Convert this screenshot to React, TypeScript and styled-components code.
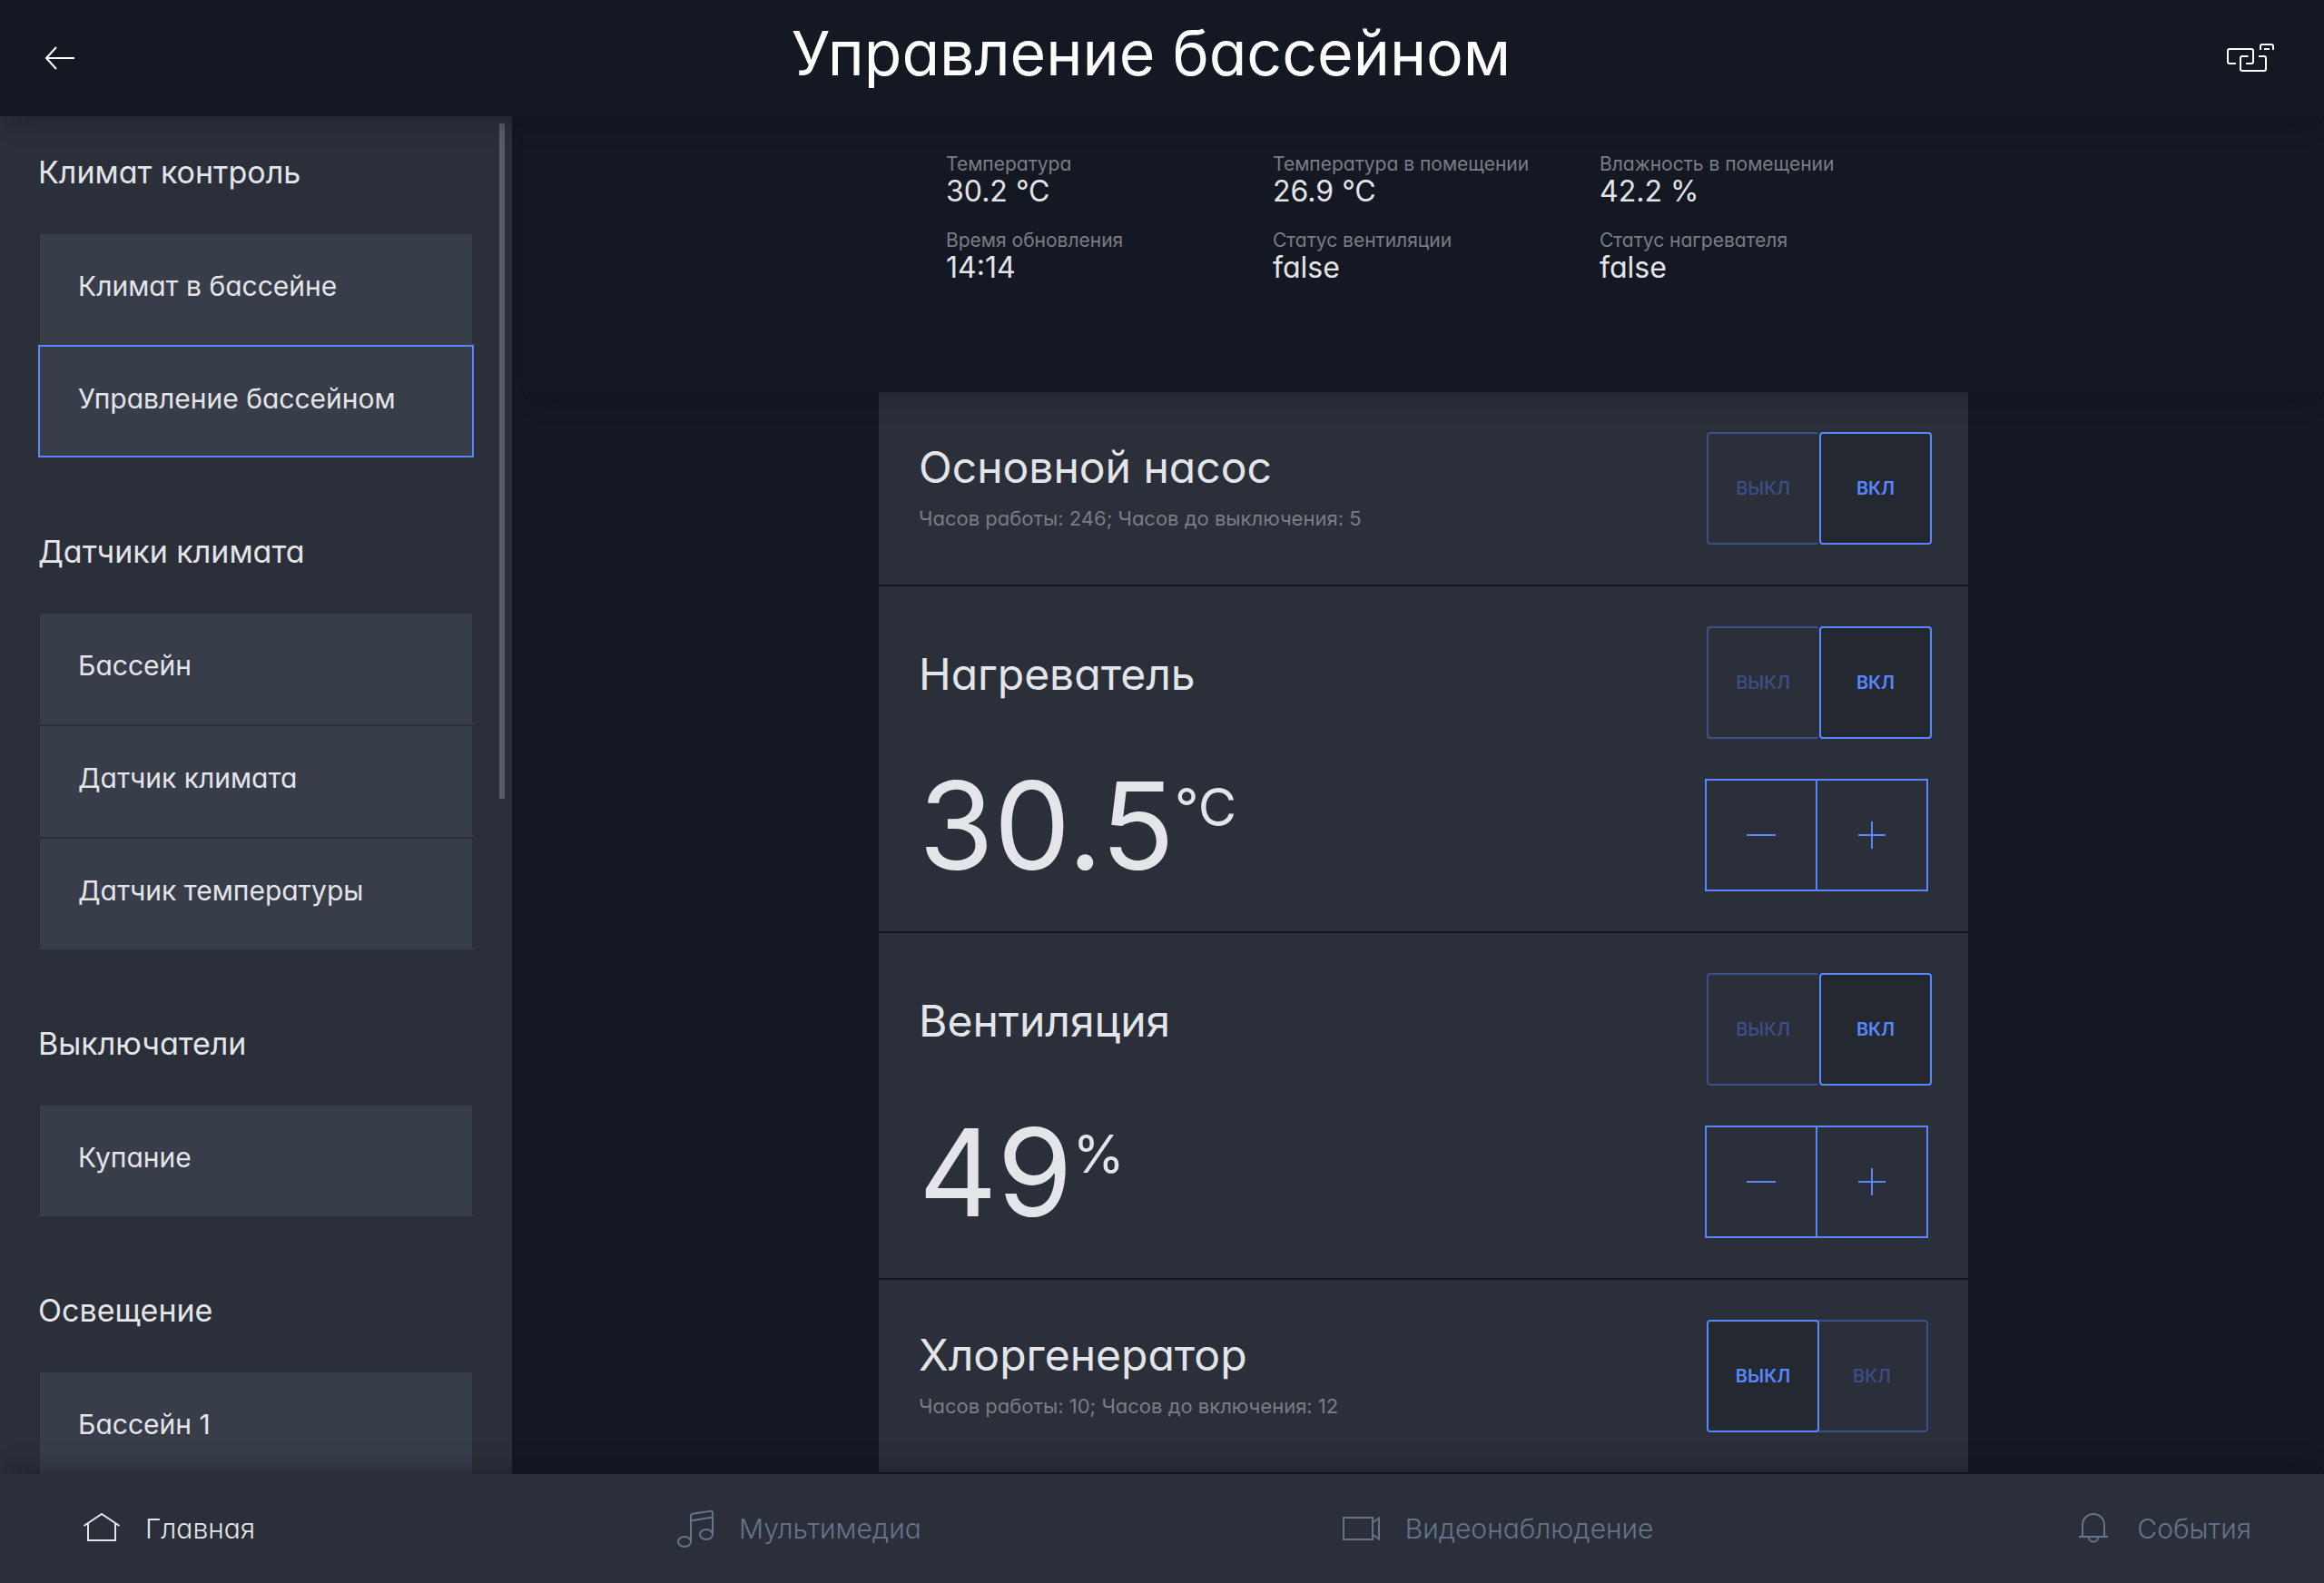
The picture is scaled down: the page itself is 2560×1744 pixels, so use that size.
import React, { useState } from "react";
import styled, { createGlobalStyle, css } from "styled-components";

const color = {
  page: "#141822",
  panel: "#2b2f3a",
  item: "#383d4a",
  text: "#e4e5e9",
  muted: "#7b7d84",
  nav: "#64748b",
  accent: "#5a86ff",
  accentDim: "#3c4f87",
  pressed: "#242830",
};

const GlobalStyle = createGlobalStyle`
  *, *::before, *::after { box-sizing: border-box; }
  body {
    margin: 0;
    background: ${color.page};
    color: ${color.text};
    font-family: Inter, "Noto Sans", sans-serif;
    font-feature-settings: "cv11";
  }
  h1, h2, h3, p, dl, dd, ul { margin: 0; padding: 0; }
  h1, h2, h3 { font-weight: 400; }
  ul { list-style: none; }
  a { color: inherit; text-decoration: none; }
  button { margin: 0; padding: 0; background: none; border: 0; color: inherit; font: inherit; cursor: pointer; }
  svg { display: block; flex: none; }
`;

const Screen = styled.div`
  display: flex;
  flex-direction: column;
  height: 100vh;
  overflow: hidden;
`;

const Header = styled.header`
  position: relative;
  z-index: 2;
  flex: none;
  display: flex;
  align-items: center;
  justify-content: space-between;
  height: 128px;
  padding: 0 54px 0 48px;
  background: ${color.page};
  color: #fff;
  box-shadow: 0 12px 24px -12px rgba(18, 16, 26, 0.6);
`;

const Title = styled.h1`
  padding-bottom: 12px;
  font-size: 68px;
  line-height: 80px;
`;

const Body = styled.div`
  flex: 1;
  min-height: 0;
  display: flex;
`;

const Sidebar = styled.aside`
  position: relative;
  flex: none;
  width: 564px;
  overflow: hidden;
  background: ${color.panel};
`;

const ScrollThumb = styled.div`
  position: absolute;
  top: 8px;
  right: 8px;
  width: 6px;
  height: calc(50% - 4px);
  background: #5b5c61;
`;

const Group = styled.section`
  padding: 40px 42px 42px;
`;

const GroupTitle = styled.h2`
  margin-bottom: 44px;
  font-size: 34px;
  line-height: 44px;
`;

const DeviceLink = styled.a<{ $active?: boolean }>`
  display: flex;
  align-items: center;
  height: 124px;
  padding: 0 42px 6px;
  border: 2px solid transparent;
  border-bottom-color: ${color.item};
  background: ${color.item};
  background-clip: padding-box;
  font-size: 30px;
  line-height: 40px;
  ${(p) => p.$active && css`border-color: ${color.accent};`}
`;

const Main = styled.main`
  flex: 1;
  min-width: 0;
  display: flex;
  flex-direction: column;
  padding-left: 12px;
`;

const Summary = styled.section`
  position: relative;
  z-index: 1;
  flex: none;
  height: 304px;
  padding-top: 40px;
  background: ${color.page};
  box-shadow: 0 12px 24px -12px rgba(18, 16, 26, 0.6);
`;

const Readings = styled.dl`
  display: grid;
  grid-template-columns: repeat(3, 360px);
  row-gap: 24px;
  max-width: 1200px;
  margin: 0 auto;
  padding-left: 74px;
`;

const ReadingLabel = styled.dt`
  color: ${color.muted};
  font-size: 21px;
  line-height: 26px;
  white-space: nowrap;
`;

const ReadingValue = styled.dd`
  font-size: 32px;
  line-height: 34px;
`;

const Cards = styled.div`
  flex: 1;
  min-height: 0;
  overflow: hidden;
  display: flex;
  flex-direction: column;
  gap: 2px;
  width: 100%;
  max-width: 1200px;
  margin: 0 auto;
`;

const Card = styled.section`
  flex: none;
  display: flex;
  flex-direction: column;
  gap: 44px;
  padding: 44px;
  background: ${color.panel};
`;

const CardRow = styled.div<{ $top?: boolean }>`
  display: flex;
  align-items: ${(p) => (p.$top ? "flex-start" : "center")};
  justify-content: space-between;
`;

const CardTitle = styled.h3`
  margin-bottom: 18px;
  font-size: 48px;
  line-height: 48px;
`;

const CardNote = styled.p`
  color: ${color.muted};
  font-size: 22px;
  line-height: 28px;
`;

const Value = styled.output`
  display: flex;
  align-items: flex-start;
  font-size: 134px;
  line-height: 102px;
`;

const Unit = styled.span`
  font-size: 58px;
  line-height: 62px;
`;

const Switch = styled.div`
  display: flex;
  width: 244px;
`;

const SwitchButton = styled.button<{ $on: boolean }>`
  flex: none;
  width: 124px;
  height: 124px;
  border: 2px solid ${color.accentDim};
  border-radius: 4px;
  color: ${color.accentDim};
  font-size: 20px;
  font-weight: 500;
  line-height: 24px;

  &:first-child { border-right-color: transparent; }
  &:last-child { margin-left: -4px; border-left-color: transparent; }

  ${(p) =>
    p.$on &&
    css`
      position: relative;
      background: ${color.pressed};
      color: ${color.accent};
      font-weight: 600;
      &:first-child, &:last-child { margin-left: 0; border-color: ${color.accent}; }
    `}
`;

const Stepper = styled.div`
  display: flex;
  color: ${color.accent};
`;

const StepButton = styled.button`
  display: grid;
  place-items: center;
  width: 124px;
  height: 124px;
  border: 2px solid ${color.accent};
  & + & { margin-left: -2px; }
`;

const Footer = styled.nav`
  position: relative;
  z-index: 2;
  flex: none;
  display: flex;
  align-items: center;
  justify-content: space-between;
  height: 120px;
  padding: 0 80px 0 88px;
  background: ${color.panel};
  box-shadow: 0 -12px 24px -12px rgba(18, 16, 26, 0.6);
`;

const NavLink = styled.a<{ $active?: boolean }>`
  display: flex;
  align-items: center;
  gap: 24px;
  color: ${(p) => (p.$active ? color.text : color.nav)};
  font-size: 30px;
  font-weight: 300;
  line-height: 40px;
`;

const NavIcon = styled.svg.attrs({ width: 48, height: 48, viewBox: "0 0 48 48", fill: "none", stroke: "currentColor", strokeWidth: 2, "aria-hidden": true })``;

const icons = {
  home: <path d="M4.5 21 24 8l19.500 13M9 18.500V37h30V18.500" />,
  music: (
    <>
      <path d="M19 38V10q0-2 2-2.300l19.500-3q2.500-.3 2.500 2V30M19 15.500l24-4" />
      <ellipse cx="12" cy="38.500" rx="7" ry="5.500" />
      <ellipse cx="36" cy="30.500" rx="7" ry="5.500" />
    </>
  ),
  video: <path d="M4 12h32v24H4zM36 17.500l7-5v23l-7-5" />,
  bell: <path d="M12 33V20a12 12 0 0 1 24 0v13M8 33h32M19 34a5 4.500 0 0 0 10 0" />,
};

const groups = [
  { title: "Климат контроль", items: ["Климат в бассейне", "Управление бассейном"] },
  { title: "Датчики климата", items: ["Бассейн", "Датчик климата", "Датчик температуры"] },
  { title: "Выключатели", items: ["Купание"] },
  { title: "Освещение", items: ["Бассейн 1"] },
];

const readings = [
  ["Температура", "30.2 °C"],
  ["Температура в помещении", "26.9 °C"],
  ["Влажность в помещении", "42.2 %"],
  ["Время обновления", "14:14"],
  ["Статус вентиляции", "false"],
  ["Статус нагревателя", "false"],
];

const nav: { icon: keyof typeof icons; label: string }[] = [
  { icon: "home", label: "Главная" },
  { icon: "music", label: "Мультимедиа" },
  { icon: "video", label: "Видеонаблюдение" },
  { icon: "bell", label: "События" },
];

type DeviceProps = {
  title: string;
  note?: string;
  initialOn?: boolean;
  initialValue?: number;
  step?: number;
  unit?: string;
};

function Device({ title, note, initialOn = false, initialValue, step = 1, unit }: DeviceProps) {
  const [on, setOn] = useState(initialOn);
  const [value, setValue] = useState(initialValue);
  return (
    <Card aria-label={title}>
      <CardRow>
        <div>
          <CardTitle>{title}</CardTitle>
          {note && <CardNote>{note}</CardNote>}
        </div>
        <Switch role="group" aria-label={title}>
          <SwitchButton type="button" $on={!on} aria-pressed={!on} onClick={() => setOn(false)}>ВЫКЛ</SwitchButton>
          <SwitchButton type="button" $on={on} aria-pressed={on} onClick={() => setOn(true)}>ВКЛ</SwitchButton>
        </Switch>
      </CardRow>
      {value !== undefined && (
        <CardRow $top>
          <Value>
            {value}
            <Unit>{unit}</Unit>
          </Value>
          <Stepper>
            <StepButton type="button" aria-label="Уменьшить" onClick={() => setValue(value - step)}>
              <svg width="32" height="32" stroke="currentColor" strokeWidth="2"><path d="M0 16h32" /></svg>
            </StepButton>
            <StepButton type="button" aria-label="Увеличить" onClick={() => setValue(value + step)}>
              <svg width="32" height="32" stroke="currentColor" strokeWidth="2"><path d="M1 16h30M16 1v30" /></svg>
            </StepButton>
          </Stepper>
        </CardRow>
      )}
    </Card>
  );
}

export default function App() {
  return (
    <>
      <GlobalStyle />
      <Screen>
        <Header>
          <button type="button" aria-label="Назад">
            <svg width="36" height="32" fill="none" stroke="currentColor" strokeWidth="2">
              <path d="M34 16H3M14 4 3 16l11 12" />
            </svg>
          </button>
          <Title>Управление бассейном</Title>
          <button type="button" aria-label="Связь">
            <svg width="54" height="32" viewBox="52 28 54 32" fill="none" stroke="currentColor" strokeWidth="2">
              <path d="M63 50h-7q-2 0-2-2V36q0-2 2-2h24q2 0 2 2v12q0 2-2 2h-6" />
              <path d="M76.500 42H70q-2 0-2 2v12q0 2 2 2h24q2 0 2-2V44q0-2-2-2h-6" />
              <path d="M90 35v-4q0-2 2-2h10q2 0 2 2v4M94 34h6" />
            </svg>
          </button>
        </Header>
        <Body>
          <Sidebar>
            {groups.map((g) => (
              <Group key={g.title}>
                <GroupTitle>{g.title}</GroupTitle>
                <ul>
                  {g.items.map((name) => (
                    <li key={name}>
                      <DeviceLink href="#" $active={name === "Управление бассейном"}>{name}</DeviceLink>
                    </li>
                  ))}
                </ul>
              </Group>
            ))}
            <ScrollThumb />
          </Sidebar>
          <Main>
            <Summary>
              <Readings>
                {readings.map(([label, value]) => (
                  <div key={label}>
                    <ReadingLabel>{label}</ReadingLabel>
                    <ReadingValue>{value}</ReadingValue>
                  </div>
                ))}
              </Readings>
            </Summary>
            <Cards>
              <Device title="Основной насос" note="Часов работы: 246; Часов до выключения: 5" initialOn />
              <Device title="Нагреватель" initialOn initialValue={30.5} step={0.5} unit="°C" />
              <Device title="Вентиляция" initialOn initialValue={49} unit="%" />
              <Device title="Хлоргенератор" note="Часов работы: 10; Часов до включения: 12" />
            </Cards>
          </Main>
        </Body>
        <Footer>
          {nav.map((n) => (
            <NavLink key={n.label} href="#" $active={n.icon === "home"}>
              <NavIcon>{icons[n.icon]}</NavIcon>
              {n.label}
            </NavLink>
          ))}
        </Footer>
      </Screen>
    </>
  );
}
